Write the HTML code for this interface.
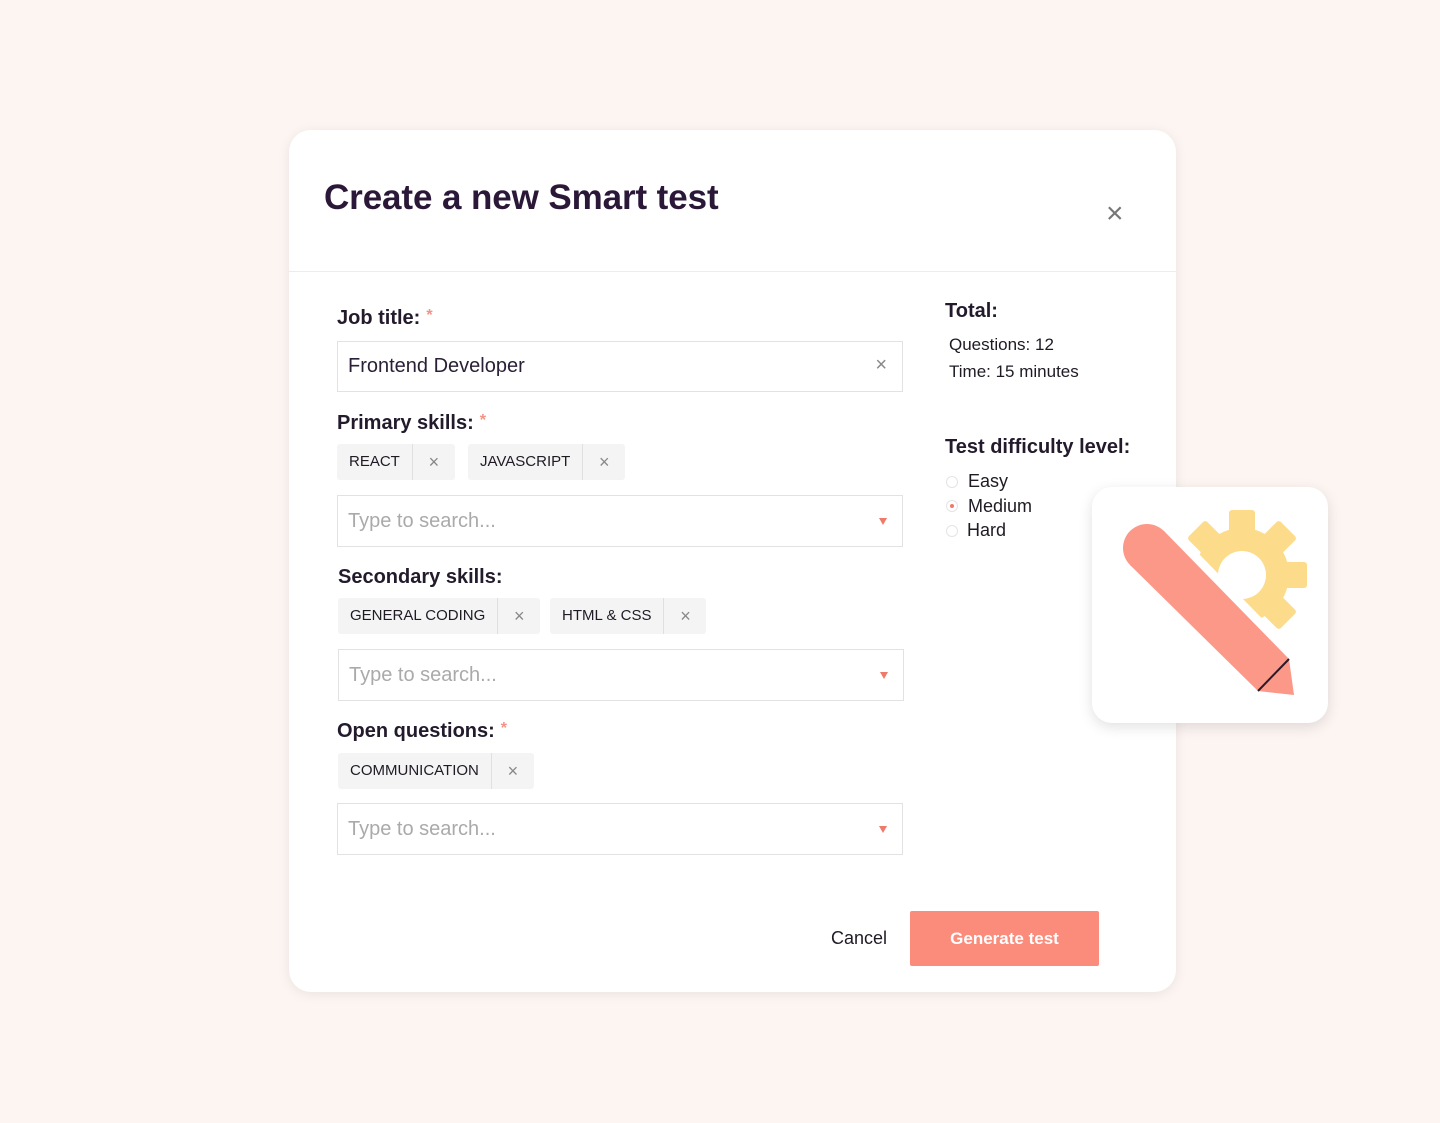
<!DOCTYPE html>
<html><head><style>
body{margin:0;width:1440px;height:1123px;background:#fdf5f2;font-family:"Liberation Sans",sans-serif;position:relative;overflow:hidden;color:#1f1a24}
.modal{position:absolute;left:289px;top:130px;width:887px;height:862px;background:#fff;border-radius:22px;box-shadow:0 2px 12px rgba(0,0,0,.08)}
.abs{position:absolute}
h1{position:absolute;left:35px;top:48px;margin:0;font-size:35px;font-weight:bold;color:#2b1838;letter-spacing:-.1px}
.sep{position:absolute;left:0;right:0;top:141px;border-top:1.5px solid #ececec}
.lbl{position:absolute;font-size:20px;font-weight:bold;color:#231a2c}
.lbl i{color:#f59283;font-style:normal;font-size:16px;vertical-align:top;margin-left:6px}
.inp{position:absolute;left:48px;width:566px;height:50px;border:1.5px solid #e2e2e2;box-sizing:border-box}
.inp span{position:absolute;left:10px;top:14px;font-size:20px;color:#aaa}
.arrow{position:absolute;right:15px;top:22px;width:0;height:0;border-left:4.5px solid transparent;border-right:4.5px solid transparent;border-top:7px solid #f07a6a}
.chip{position:absolute;height:36px;background:#f4f4f4;border-radius:3px;font-size:15px;display:flex;align-items:center}
.chip b{font-weight:normal;padding:0 12px;border-right:1.5px solid #e0e0e0;height:36px;line-height:36px}
.chip s{text-decoration:none;width:42px;text-align:center;color:#888;font-size:18px}
.rad{position:absolute;width:12px;height:12px;border-radius:50%;border:1px solid #e4e4e4;box-sizing:border-box}
</style></head><body>
<div class="modal">
<h1>Create a new Smart test</h1>
<div class="abs" style="left:817px;top:69px;font-size:30px;color:#777;line-height:1">×</div>
<div class="sep"></div>
<div class="lbl" style="left:48px;top:177px">Job title:<i>*</i></div>
<div class="inp" style="top:211px;height:51px"><span style="color:#2a1f36;top:13px">Frontend Developer</span><div class="abs" style="right:15px;top:12px;color:#888;font-size:20px">×</div></div>
<div class="lbl" style="left:48px;top:282px">Primary skills:<i>*</i></div>
<div class="chip" style="left:48px;top:314px"><b>REACT</b><s>×</s></div>
<div class="chip" style="left:179px;top:314px"><b>JAVASCRIPT</b><s>×</s></div>
<div class="inp" style="top:365px;height:52px"><span>Type to search...</span><div class="arrow"></div></div>
<div class="lbl" style="left:49px;top:436px">Secondary skills:</div>
<div class="chip" style="left:49px;top:468px"><b>GENERAL CODING</b><s>×</s></div>
<div class="chip" style="left:261px;top:468px"><b>HTML &amp; CSS</b><s>×</s></div>
<div class="inp" style="left:49px;top:519px;height:52px"><span>Type to search...</span><div class="arrow"></div></div>
<div class="lbl" style="left:48px;top:590px">Open questions:<i>*</i></div>
<div class="chip" style="left:49px;top:623px"><b>COMMUNICATION</b><s>×</s></div>
<div class="inp" style="top:673px;height:52px"><span>Type to search...</span><div class="arrow"></div></div>
<div class="lbl" style="left:656px;top:170px">Total:</div>
<div class="abs" style="left:660px;top:205px;font-size:17px">Questions: 12</div>
<div class="abs" style="left:660px;top:232px;font-size:17px">Time: 15 minutes</div>
<div class="lbl" style="left:656px;top:306px">Test difficulty level:</div>
<div class="rad" style="left:657px;top:346px"></div><div class="abs" style="left:679px;top:341px;font-size:18px">Easy</div>
<div class="rad" style="left:657px;top:370px"><div style="position:absolute;left:3px;top:3px;width:4px;height:4px;border-radius:50%;background:#f07a6a"></div></div><div class="abs" style="left:679px;top:366px;font-size:18px">Medium</div>
<div class="rad" style="left:657px;top:395px"></div><div class="abs" style="left:678px;top:390px;font-size:18px">Hard</div>
<div class="abs" style="left:542px;top:798px;font-size:18px">Cancel</div>
<div class="abs" style="left:621px;top:781px;width:189px;height:55px;background:#fb8c7c;border-radius:2px;color:#fff;font-weight:bold;font-size:17px;text-align:center;line-height:55px">Generate test</div>
</div>
<div class="abs" style="left:1092px;top:487px;width:236px;height:236px;background:#fff;border-radius:20px;box-shadow:0 4px 14px rgba(0,0,0,.12)"></div>
<svg class="abs" style="left:0;top:0" width="1440" height="1123">
<g fill="#fcdc8a" transform="translate(1242,575)">
<circle r="47"/>
<g id="t"><rect x="-13" y="-65" width="26" height="24" rx="3"/></g>
<use href="#t" transform="rotate(45)"/><use href="#t" transform="rotate(90)"/><use href="#t" transform="rotate(135)"/><use href="#t" transform="rotate(180)"/><use href="#t" transform="rotate(225)"/><use href="#t" transform="rotate(270)"/><use href="#t" transform="rotate(315)"/>
<circle r="24" fill="#fff"/>
</g>
<g stroke="#fff" stroke-width="18" fill="#fff" stroke-linejoin="round">
<circle cx="1147" cy="548" r="24"/>
<polygon points="1164,531 1289,659 1258,691 1130,565"/>
</g>
<circle cx="1147" cy="548" r="24" fill="#fc9887"/>
<polygon points="1164,531 1289,659 1294,695 1258,691 1130,565" fill="#fc9887"/>
<line x1="1289" y1="659" x2="1258" y2="691" stroke="#2a1a2a" stroke-width="2"/>
</svg>
</body></html>
